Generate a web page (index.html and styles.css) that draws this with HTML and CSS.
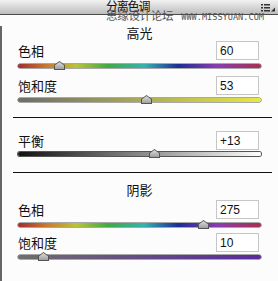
FILE: index.html
```html
<!DOCTYPE html>
<html lang="zh-CN">
<head>
  <meta charset="UTF-8">
  <title>分离色调</title>
  <link rel="stylesheet" href="styles.css">
</head>
<body>
  <div class="titlebar">
    <span class="title">分离色调</span>
    <svg class="menu" width="14" height="9" viewBox="0 0 14 9">
      <rect x="0" y="1" width="2" height="1.5" fill="#333"/>
      <rect x="3" y="1" width="6" height="1.5" fill="#333"/>
      <rect x="0" y="4" width="2" height="1.5" fill="#333"/>
      <rect x="3" y="4" width="6" height="1.5" fill="#333"/>
      <rect x="0" y="7" width="2" height="1.5" fill="#333"/>
      <rect x="3" y="7" width="6" height="1.5" fill="#333"/>
      <polygon points="10,8.5 14,8.5 14,4.5" fill="#333"/>
    </svg>
    <div class="watermark">
      <span class="wm-cn">思缘设计论坛</span>
      <span class="wm-en">WWW.MISSYUAN.COM</span>
    </div>
  </div>

  <div class="panel">
    <div class="section-title first">高光</div>

    <div class="row">
      <span class="label">色相</span>
      <input class="num" type="text" value="60">
    </div>
    <div class="track hue">
      <span class="thumb" style="left: 36px"></span>
    </div>

    <div class="row r2">
      <span class="label">饱和度</span>
      <input class="num" type="text" value="53">
    </div>
    <div class="track sat-hi t2">
      <span class="thumb" style="left: 123px"></span>
    </div>

    <hr class="divider">

    <div class="row r3">
      <span class="label">平衡</span>
      <input class="num" type="text" value="+13">
    </div>
    <div class="track balance t3">
      <span class="thumb" style="left: 131px"></span>
    </div>

    <hr class="divider d2">

    <div class="section-title">阴影</div>

    <div class="row r4">
      <span class="label">色相</span>
      <input class="num" type="text" value="275">
    </div>
    <div class="track hue">
      <span class="thumb" style="left: 180px"></span>
    </div>

    <div class="row r5">
      <span class="label">饱和度</span>
      <input class="num" type="text" value="10">
    </div>
    <div class="track sat-lo t2">
      <span class="thumb" style="left: 20px"></span>
    </div>
  </div>
</body>
</html>
```

FILE: styles.css
```css
body { margin: 0; width: 278px; height: 281px; overflow: hidden; background: #fcfcfc; font-family: "Noto Sans CJK SC", sans-serif; color: #111; }

.titlebar { position: relative; height: 14px; border-bottom: 1px solid #4a4a4a; background: linear-gradient(#f2f2f2, #bdbdbd); display: flex; align-items: flex-start; }
.title { margin-left: 106px; font-size: 12px; line-height: 11px; color: #111; letter-spacing: -1.2px; }
.menu { position: absolute; right: 3px; top: 3px; }
.watermark { position: absolute; left: 106px; top: 9px; display: flex; align-items: center; gap: 8px; color: #555; white-space: nowrap; }
.wm-cn { font-size: 11.5px; line-height: 13px; letter-spacing: -0.3px; }
.wm-en { font-family: "DejaVu Sans Mono", monospace; font-size: 8.6px; line-height: 10px; margin-top: 2px; }

.panel { border-left: 2px solid #666; height: 266px; padding: 0 17px 0 16px; }

.section-title { text-align: center; font-size: 13px; line-height: 13px; height: 13px; margin-top: 10px; }
.section-title.first { margin-top: 11px; margin-bottom: 2px; }

.row { display: flex; justify-content: space-between; align-items: center; height: 19px; margin-right: 2px; }
.r2 { margin-top: 8px; }
.r3 { margin-top: 13px; }
.r4 { margin-top: 4px; }
.r5 { margin-top: 6px; }
.label { font-size: 13px; line-height: 13px; }
.num { box-sizing: border-box; width: 43px; height: 19px; border: 1px solid #c6c6c6; background: #fff; padding: 0 0 0 3px; font-family: "Liberation Sans", Arial, sans-serif; font-size: 12px; color: #111; }

.track { position: relative; height: 4px; margin-top: 4px; border-radius: 3px; box-shadow: 0 0 0 0.5px #555; }
.t2 { margin-top: 3px; }
.t3 { margin-top: 2px; }
.hue { background: linear-gradient(to right, #a22c2c, #cc7a30 12%, #b9c438 24%, #3faa44 37%, #35b2b2 52%, #1d2c96 66%, #8a3cb2 82%, #a8304c); }
.sat-hi { background: linear-gradient(to right, #6c6c6c, #e8e842); }
.balance { background: linear-gradient(to right, #111, #fff); box-shadow: 0 0 0 1px #555; }
.sat-lo { background: linear-gradient(to right, #6e6e6e, #5a2a9c); }

.thumb { position: absolute; top: -3px; width: 11px; height: 9px; background: #555; clip-path: polygon(50% 0, 100% 45%, 100% 100%, 0 100%, 0 45%); }
.thumb::after { content: ""; position: absolute; left: 1px; top: 1px; right: 1px; bottom: 1px; background: linear-gradient(#dcdcdc, #a0a0a0); clip-path: polygon(50% 0, 100% 45%, 100% 100%, 0 100%, 0 45%); }

.divider { border: 0; border-top: 1px solid #111; margin: 15px -11px 0 -5px; }
.d2 { margin-top: 16px; }
```
